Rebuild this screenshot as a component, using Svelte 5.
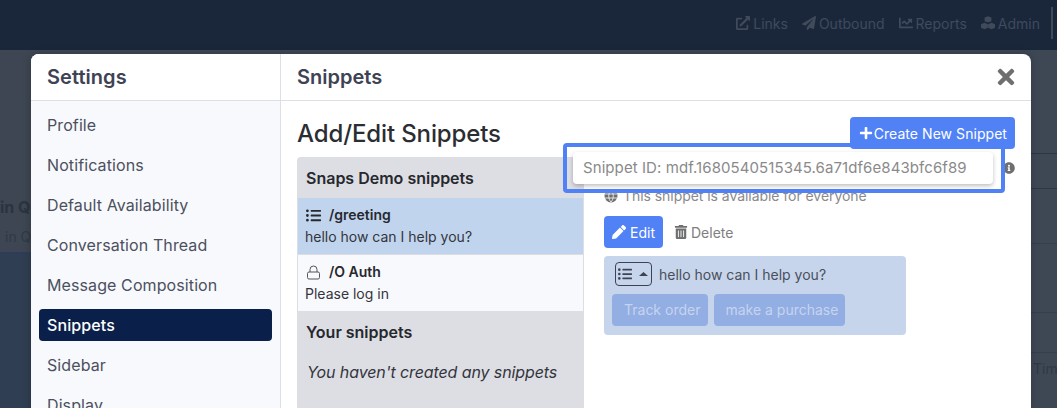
<script>
  const icons = {
    plus: ["0 0 448 512", "M416 208H272V64c0-17.67-14.33-32-32-32h-32c-17.67 0-32 14.33-32 32v144H32c-17.67 0-32 14.33-32 32v32c0 17.67 14.33 32 32 32h144v144c0 17.67 14.33 32 32 32h32c17.67 0 32-14.33 32-32V304h144c17.67 0 32-14.33 32-32v-32c0-17.67-14.33-32-32-32z"],
    times: ["0 0 352 512", "M242.72 256l100.07-100.07c12.28-12.28 12.28-32.19 0-44.48l-22.24-22.24c-12.28-12.28-32.19-12.28-44.48 0L176 189.28 75.93 89.21c-12.28-12.28-32.19-12.28-44.48 0L9.21 111.45c-12.28 12.28-12.28 32.19 0 44.48L109.28 256 9.21 356.07c-12.28 12.28-12.28 32.19 0 44.48l22.24 22.24c12.28 12.28 32.2 12.28 44.48 0L176 322.72l100.07 100.07c12.28 12.28 32.2 12.28 44.48 0l22.24-22.24c12.28-12.28 12.28-32.19 0-44.48L242.72 256z"],
    pencil: ["0 0 512 512", "M497.9 142.1l-46.1 46.1c-4.7 4.7-12.3 4.7-17 0l-111-111c-4.7-4.7-4.7-12.3 0-17l46.1-46.1c18.7-18.7 49.1-18.7 67.9 0l60.1 60.1c18.8 18.7 18.8 49.1 0 67.9zM284.2 99.8L21.6 362.4.4 483.9c-2.9 16.4 11.4 30.6 27.8 27.8l121.5-21.3 262.6-262.6c4.7-4.7 4.7-12.3 0-17l-111-111c-4.8-4.7-12.4-4.7-17.1 0z"],
    trash: ["0 0 448 512", "M32 464a48 48 0 0 0 48 48h288a48 48 0 0 0 48-48V128H32zm272-256a16 16 0 0 1 32 0v224a16 16 0 0 1-32 0zm-96 0a16 16 0 0 1 32 0v224a16 16 0 0 1-32 0zm-96 0a16 16 0 0 1 32 0v224a16 16 0 0 1-32 0zM432 32H312l-9.4-18.7A24 24 0 0 0 281.1 0H166.8a23.72 23.72 0 0 0-21.4 13.3L136 32H16A16 16 0 0 0 0 48v32a16 16 0 0 0 16 16h416a16 16 0 0 0 16-16V48a16 16 0 0 0-16-16z"],
    plane: ["0 0 512 512", "M476 3.2L12.5 270.6c-18.1 10.4-15.8 35.6 2.2 43.2L121 358.4l287.3-253.2c5.5-4.9 13.3 2.6 8.6 8.3L176 407v80.5c0 23.6 28.5 32.9 42.5 15.8L282 426l124.6 52.2c14.2 6 30.4-2.9 33-18.2l72-432C515 7.8 493.3-6.8 476 3.2z"],
    info: ["0 0 512 512", "M256 8C119 8 8 119.1 8 256c0 137 111 248 248 248s248-111 248-248C504 119.1 393 8 256 8zm0 110c23.2 0 42 18.8 42 42s-18.8 42-42 42-42-18.8-42-42 18.8-42 42-42zm56 254c0 6.6-5.4 12-12 12h-88c-6.6 0-12-5.4-12-12v-24c0-6.6 5.4-12 12-12h12v-64h-12c-6.6 0-12-5.4-12-12v-24c0-6.6 5.4-12 12-12h64c6.6 0 12 5.4 12 12v100h12c6.6 0 12 5.4 12 12v24z"],
    link: ["0 0 512 512", "M432,320H400a16,16,0,0,0-16,16V448H64V128H208a16,16,0,0,0,16-16V80a16,16,0,0,0-16-16H48A48,48,0,0,0,0,112V464a48,48,0,0,0,48,48H400a48,48,0,0,0,48-48V336A16,16,0,0,0,432,320ZM488,0h-128c-21.37,0-32.05,25.91-17,41l35.73,35.73L135,320.37a24,24,0,0,0,0,34L157.67,377a24,24,0,0,0,34,0L435.28,133.32,471,169c15,15,41,4.5,41-17V24A24,24,0,0,0,488,0Z"],
    chart: ["0 0 512 512", "M496 384H64V80c0-8.84-7.16-16-16-16H16C7.16 64 0 71.16 0 80v336c0 17.67 14.33 32 32 32h464c8.84 0 16-7.16 16-16v-32c0-8.84-7.16-16-16-16zM464 96H345.94c-21.38 0-32.09 25.85-16.97 40.97l32.4 32.4L288 242.75l-73.37-73.37c-12.5-12.5-32.76-12.5-45.25 0l-68.69 68.69c-6.25 6.25-6.25 16.38 0 22.63l22.62 22.62c6.25 6.25 16.38 6.25 22.63 0L192 237.25l73.37 73.37c12.5 12.5 32.76 12.5 45.25 0l96-96 32.4 32.4c15.12 15.12 40.97 4.41 40.97-16.97V112c0-8.84-7.16-16-16-16z"],
    cubes: ["0 0 512 512", "M256 8l126 50v130l-126 50-126-50V58zM126 250l126 50v130l-126 50L0 430V300zM386 250l126 50v130l-126 50-126-50V300z"],
    list: ["0 0 512 512", "M48 48a48 48 0 1 0 48 48 48 48 0 0 0-48-48zm0 160a48 48 0 1 0 48 48 48 48 0 0 0-48-48zm0 160a48 48 0 1 0 48 48 48 48 0 0 0-48-48zm448 16H176a16 16 0 0 0-16 16v32a16 16 0 0 0 16 16h320a16 16 0 0 0 16-16v-32a16 16 0 0 0-16-16zm0-320H176a16 16 0 0 0-16 16v32a16 16 0 0 0 16 16h320a16 16 0 0 0 16-16V80a16 16 0 0 0-16-16zm0 160H176a16 16 0 0 0-16 16v32a16 16 0 0 0 16 16h320a16 16 0 0 0 16-16v-32a16 16 0 0 0-16-16z"]
  };

  const navLinks = [
    { label: "Links", icon: "link" },
    { label: "Outbound", icon: "plane" },
    { label: "Reports", icon: "chart" },
    { label: "Admin", icon: "cubes" }
  ];

  const menu = [
    "Profile",
    "Notifications",
    "Default Availability",
    "Conversation Thread",
    "Message Composition",
    "Snippets",
    "Sidebar",
    "Display"
  ];
</script>

{#snippet icon(name, size)}
  <svg class="icon" width={size} height={size} viewBox={icons[name][0]} aria-hidden="true">
    <path fill="currentColor" d={icons[name][1]} />
  </svg>
{/snippet}

<div class="page">
  <header class="topbar">
    <nav class="nav">
      {#each navLinks as link}
        <span class="nav-link">{@render icon(link.icon, 14)}{link.label}</span>
      {/each}
      <span class="nav-sep"></span>
    </nav>
  </header>

  <div class="behind">
    <div class="behind-left">
      <div class="behind-top">
        <div class="behind-bold">in Qu</div>
        <div class="behind-small">in Qu</div>
      </div>
    </div>
    <div class="behind-right">
      <div class="rule r1"></div>
      <div class="rule r2"></div>
      <div class="rule r3"></div>
      <div class="rule r4"></div>
      <div class="rule r5"></div>
      <div class="behind-time">Time</div>
    </div>
  </div>

  <div class="overlay">
    <div class="modal">
      <aside class="side">
        <h2 class="side-title">Settings</h2>
        <ul class="menu">
          {#each menu as item}
            <li class:active={item === "Snippets"}>{item}</li>
          {/each}
        </ul>
      </aside>

      <section class="main">
        <div class="main-head">
          <h2>Snippets</h2>
          <span class="close">{@render icon("times", 24)}</span>
        </div>

        <div class="main-body">
          <div class="title-row">
            <h1>Add/Edit Snippets</h1>
            <button class="create">{@render icon("plus", 14)}Create New Snippet</button>
          </div>

          <div class="columns">
            <div class="list">
              <h3>Snaps Demo snippets</h3>
              <div class="snippet selected">
                <div class="snippet-name">{@render icon("list", 15)}<span>/greeting</span></div>
                <div>hello how can I help you?</div>
              </div>
              <div class="snippet">
                <div class="snippet-name">
                  <svg class="icon lock" width="15" height="15" viewBox="0 0 15 15" aria-hidden="true">
                    <rect x="1.5" y="7" width="12" height="7" rx="1.5" fill="none" stroke="currentColor" />
                    <path d="M4 7V4.5a3.5 3.5 0 0 1 7 0V7" fill="none" stroke="currentColor" />
                  </svg>
                  <span>/O Auth</span>
                </div>
                <div>Please log in</div>
              </div>
              <h3 class="yours">Your snippets</h3>
              <p class="empty">You haven't created any snippets</p>
            </div>

            <div class="detail">
              <span class="info">{@render icon("info", 12)}</span>
              <div class="availability">
                <svg class="icon" width="14" height="14" viewBox="0 0 14 14" aria-hidden="true">
                  <circle cx="7" cy="7" r="6.5" fill="currentColor" />
                  <path d="M1 5h12M1 9h12M7 1c-3 3-3 9 0 12M7 1c3 3 3 9 0 12" fill="none" stroke="#fff" stroke-width=".8" />
                </svg>
                This snippet is available for everyone
              </div>
              <div class="actions">
                <button class="edit">{@render icon("pencil", 14)}Edit</button>
                <button class="delete">{@render icon("trash", 14)}Delete</button>
              </div>
              <div class="preview">
                <div class="preview-top">
                  <span class="type-select">
                    {@render icon("list", 14)}
                    <svg class="icon" width="9" height="4" viewBox="0 0 9 4" aria-hidden="true">
                      <path d="M4.5 0L9 4H0z" fill="currentColor" />
                    </svg>
                  </span>
                  <span>hello how can I help you?</span>
                </div>
                <div class="preview-btns">
                  <span>Track order</span>
                  <span>make a purchase</span>
                </div>
              </div>
            </div>
          </div>
        </div>
      </section>
    </div>

    <div class="highlight"></div>
    <div class="tooltip">Snippet ID: mdf.1680540515345.6a71df6e843bfc6f89</div>
  </div>
</div>

<style>
  :global(body) {
    margin: 0;
  }

  .page {
    position: relative;
    height: 408px;
    overflow: hidden;
    background: #3e4854;
    font-family: Inter, "Liberation Sans", sans-serif;
    color: #3e4354;
  }

  .icon {
    flex: none;
    display: block;
  }

  h1, h2, h3, p, ul {
    margin: 0;
    padding: 0;
  }

  button {
    font: inherit;
    border: 0;
    display: flex;
    align-items: center;
  }

  /* what sits behind the dimmed backdrop */
  .topbar {
    height: 50px;
    background: #1a273b;
    display: flex;
    justify-content: flex-end;
  }

  .nav {
    display: flex;
    align-items: center;
    height: 46px;
    color: #3f4a5b;
    font-size: 14px;
  }

  .nav-link {
    display: flex;
    align-items: center;
    gap: 3px;
    margin-left: 14px;
  }

  .nav-sep {
    width: 2px;
    height: 32px;
    background: #3f4a5b;
    margin: 0 4px 0 11px;
  }

  .behind {
    display: flex;
    justify-content: space-between;
    height: 358px;
  }

  .behind-left {
    width: 31px;
    background: #2f3e52;
    overflow: hidden;
    white-space: nowrap;
  }

  .behind-top {
    height: 204px;
    box-sizing: border-box;
    padding-top: 147px;
    background: #3d4652;
    border-bottom: 2px solid #2d3c58;
  }

  .behind-bold {
    font-size: 16px;
    font-weight: 700;
    line-height: 20px;
    color: #2a3340;
  }

  .behind-small {
    font-size: 14px;
    line-height: 18px;
    margin-top: 11px;
    padding-left: 5px;
    color: #2f3946;
  }

  .behind-right {
    position: relative;
    width: 26px;
    background: #3e4854;
    overflow: hidden;
    white-space: nowrap;
  }

  .rule {
    position: absolute;
    left: 0;
    right: 0;
    height: 1px;
    background: #2d3643;
  }

  .r1 { top: 103px; }
  .r2 { top: 138px; }
  .r3 { top: 193px; background: #363f4c; }
  .r4 { top: 262px; background: #363f4c; }
  .r5 { top: 302px; background: #363f4c; }

  .behind-time {
    position: absolute;
    left: 2px;
    top: 310px;
    font-size: 14px;
    color: #2f3946;
  }

  /* modal */
  .overlay {
    position: absolute;
    inset: 0;
  }

  .modal {
    margin: 54px 26px 0 31px;
    height: 500px;
    display: flex;
    background: #fff;
    border-radius: 8px 8px 0 0;
    box-shadow: 0 0 8px rgba(0, 0, 0, 0.22);
    overflow: hidden;
  }

  .side {
    width: 250px;
    flex: none;
    box-sizing: border-box;
    border-right: 1px solid #dddee6;
    background: #f8f9fc;
  }

  .side-title {
    height: 47px;
    box-sizing: border-box;
    padding: 11px 16px 0;
    background: #fff;
    border-bottom: 1px solid #dddee6;
    font-size: 20px;
    font-weight: 600;
    line-height: 25px;
    letter-spacing: 0.05px;
    color: #3e4354;
  }

  .menu {
    list-style: none;
    padding: 8px 8px 0;
  }

  .menu li {
    height: 32px;
    line-height: 32px;
    margin-bottom: 8px;
    padding-left: 8px;
    border-radius: 4px;
    font-size: 16px;
    letter-spacing: 0.1px;
    color: #4b5060;
  }

  .menu li.active {
    background: #0a1f4a;
    color: #fff;
    font-weight: 500;
  }

  .main {
    flex: 1;
    min-width: 0;
  }

  .main-head {
    height: 47px;
    box-sizing: border-box;
    padding: 11px 16px 0;
    border-bottom: 1px solid #dddee6;
    display: flex;
    justify-content: space-between;
  }

  .main-head h2 {
    font-size: 20px;
    font-weight: 600;
    line-height: 25px;
    color: #3e4354;
  }

  .close {
    color: #6f6f6f;
    margin-right: -3px;
  }

  .main-body {
    padding: 16px 16px 0;
  }

  .title-row {
    display: flex;
    justify-content: space-between;
    align-items: flex-start;
    height: 40px;
  }

  h1 {
    font-size: 24px;
    font-weight: 500;
    line-height: 34px;
    letter-spacing: -0.12px;
    color: #2b2d33;
  }

  .create {
    height: 32px;
    padding: 0 8px 0 9px;
    gap: 1px;
    background: #5082f6;
    color: #fff;
    border-radius: 4px;
    font-size: 14px;
    letter-spacing: 0.05px;
  }

  .columns {
    display: flex;
  }

  .list {
    width: 287px;
    flex: none;
    box-sizing: border-box;
    height: 300px;
    padding: 0 1px;
    background: #dddee4;
    border-radius: 4px 4px 0 0;
    color: #2b2d33;
    font-size: 14px;
  }

  h3 {
    font-size: 16px;
    font-weight: 600;
    line-height: 20px;
    padding: 11px 8px 10px;
    color: #26282e;
  }

  .snippet {
    height: 56px;
    box-sizing: border-box;
    padding: 6px 7px 0;
    margin-bottom: 1px;
    background: #f8f9fc;
    line-height: 22px;
    color: #33353c;
  }

  .snippet.selected {
    background: #c1d4ee;
  }

  .snippet-name {
    display: flex;
    align-items: center;
    gap: 8px;
    padding-left: 1px;
    font-weight: 600;
    color: #26282e;
  }

  .lock {
    color: #555;
  }

  .yours {
    padding-top: 10px;
  }

  .empty {
    margin-top: 9px;
    padding-left: 9px;
    font-size: 16px;
    font-style: italic;
    line-height: 22px;
    letter-spacing: -0.1px;
    color: #33353c;
  }

  .detail {
    position: relative;
    flex: 1;
    padding: 30px 0 0 20px;
    font-size: 14px;
    color: #8a8a8a;
  }

  .info {
    position: absolute;
    right: 0;
    top: 5px;
    color: #6f6f6f;
  }

  .availability {
    display: flex;
    align-items: center;
    gap: 5px;
    height: 17px;
    white-space: nowrap;
    letter-spacing: -0.05px;
    color: #8a8a8a;
  }

  .availability .icon {
    color: #6f6f6f;
  }

  .actions {
    display: flex;
    align-items: center;
    gap: 11px;
    margin-top: 12px;
  }

  .edit {
    height: 32px;
    padding: 0 8px;
    gap: 4px;
    background: #5082f6;
    color: #fff;
    border-radius: 4px;
    font-size: 14px;
  }

  .delete {
    background: none;
    padding: 0;
    gap: 3px;
    color: #808080;
    font-size: 14px;
  }

  .delete .icon {
    color: #6f6f6f;
  }

  .preview {
    margin-top: 8px;
    width: 302px;
    height: 79px;
    box-sizing: border-box;
    padding: 6px 8px 0;
    background: #c7d5ec;
    border-radius: 4px;
    color: #4a4f5a;
  }

  .preview-top {
    display: flex;
    align-items: center;
    gap: 7px;
    padding-left: 3px;
  }

  .type-select {
    width: 37px;
    height: 24px;
    box-sizing: border-box;
    padding: 0 3px 0 2px;
    border: 1px solid #3e4354;
    border-radius: 4px;
    display: flex;
    align-items: center;
    justify-content: space-between;
    color: #3e4354;
  }

  .preview-btns {
    display: flex;
    gap: 6px;
    margin-top: 8px;
  }

  .preview-btns span {
    height: 32px;
    line-height: 32px;
    padding: 0 8px 0 12px;
    background: #92aee2;
    color: #c6d4f0;
    border-radius: 4px;
  }

  .preview-btns span:last-child {
    padding: 0 7px 0 11px;
  }

  /* the annotation on top of the screenshot */
  .highlight {
    position: absolute;
    left: 563px;
    top: 143px;
    width: 442px;
    height: 50px;
    box-sizing: border-box;
    border: 4px solid #5082f6;
    border-radius: 4px;
  }

  .tooltip {
    position: absolute;
    left: 573px;
    top: 152px;
    width: 420px;
    height: 32px;
    box-sizing: border-box;
    padding-left: 10px;
    line-height: 32px;
    background: #fff;
    border-radius: 4px;
    box-shadow: 0 2px 4px rgba(0, 0, 0, 0.25);
    font-size: 15px;
    letter-spacing: 0.08px;
    color: #8a8a8a;
    white-space: nowrap;
  }
</style>
